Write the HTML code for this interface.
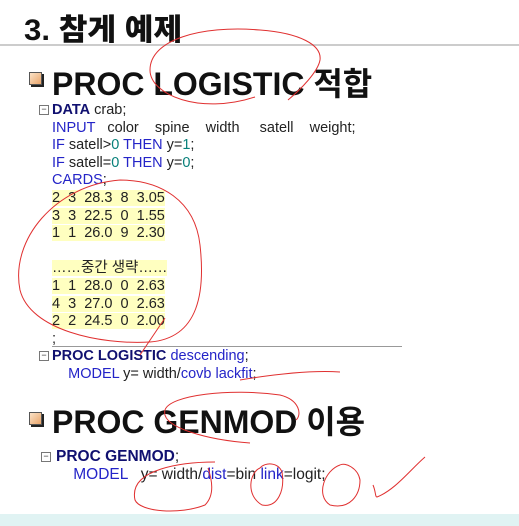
<!DOCTYPE html>
<html><head><meta charset="utf-8"><style>
body{margin:0;width:519px;height:526px;background:#fff;position:relative;overflow:hidden;font-family:"Liberation Sans","Noto Sans CJK KR",sans-serif}
.a{position:absolute;white-space:pre}
.t{font-weight:900;font-size:30px;color:#111;left:24px;top:5px;transform:scaleX(1.04);transform-origin:left}
.h{font-weight:bold;font-size:32px;color:#111;left:52px}
.bul{position:absolute;width:11px;height:11px;background:linear-gradient(135deg,#fbe3c8,#e9a46a);border:1px solid #555;box-shadow:2px 2px 0 #222}
.c{font-size:14.5px;color:#222;left:52px;line-height:17.6px}
.k{color:#2424c8}.b{color:#101070;font-weight:bold}.g{color:#08807a}
.y{background:#ffffc0}
.m{position:absolute;width:8px;height:8px;border:1px solid #777;font-size:9px;line-height:7px;text-align:center;color:#333}
</style></head><body>
<div class="a t">3. 참게 예제</div>
<div style="position:absolute;left:0;top:44px;width:519px;height:2px;background:#ccc"></div>
<div class="bul" style="left:29px;top:72px"></div>
<div class="a h" style="top:59px">PROC LOGISTIC 적합</div>
<div class="m" style="left:39px;top:105px">−</div>
<div class="a c" style="top:102px"><span class="b">DATA</span> crab;
<span class="k">INPUT</span>   color    spine    width     satell    weight;
<span class="k">IF</span> satell&gt;<span class="g">0</span> <span class="k">THEN</span> y=<span class="g">1</span>;
<span class="k">IF</span> satell=<span class="g">0</span> <span class="k">THEN</span> y=<span class="g">0</span>;
<span class="k">CARDS</span>;
<span class="y">2  3  28.3  8  3.05</span>
<span class="y">3  3  22.5  0  1.55</span>
<span class="y">1  1  26.0  9  2.30</span>

<span class="y">……중간 생략……</span>
<span class="y">1  1  28.0  0  2.63</span>
<span class="y">4  3  27.0  0  2.63</span>
<span class="y">2  2  24.5  0  2.00</span>
;</div>
<div style="position:absolute;left:52px;top:346px;width:350px;height:1px;background:#999"></div>
<div class="m" style="left:39px;top:351px">−</div>
<div class="a c" style="top:348px"><span class="b">PROC LOGISTIC</span> <span class="k">descending</span>;
    <span class="k">MODEL</span> y= width/<span class="k">covb lackfit</span>;</div>
<div class="bul" style="left:29px;top:412px"></div>
<div class="a h" style="top:397px">PROC GENMOD 이용</div>
<div class="m" style="left:41px;top:452px">−</div>
<div class="a c" style="top:448px;left:56px;font-size:15.5px"><span class="b">PROC GENMOD</span>;
    <span class="k">MODEL</span>   y= width/<span class="k">dist</span>=bin <span class="k">link</span>=logit;</div>
<div style="position:absolute;left:0;top:514px;width:519px;height:12px;background:#e0f3f3"></div>
<svg style="position:absolute;left:0;top:0" width="519" height="526" fill="none" stroke="#e03030" stroke-width="1">
<path d="M255 97 C200 115 150 95 150 70 C150 40 200 25 260 30 C300 33 322 45 320 60 C318 72 300 90 288 100"/>
<path d="M120 180 C55 185 10 240 20 290 C30 330 100 345 150 342 C200 338 205 290 200 245 C195 200 160 180 120 180"/>
<path d="M165 318 L140 355"/>
<path d="M340 372 C310 370 270 375 240 380"/>
<path d="M250 443 C210 440 160 428 165 410 C170 395 230 388 280 395 C300 400 302 415 296 420"/>
<path d="M215 462 C185 462 128 468 135 500 C140 512 180 515 205 505 C215 495 212 480 208 468"/>
<path d="M260 468 C250 472 245 495 262 505 C278 508 285 490 282 472 C278 462 265 462 260 468"/>
<path d="M340 465 C325 470 315 495 330 505 C350 510 360 495 360 480 C358 468 345 462 340 465"/>
<path d="M373 485 C376 492 375 497 377 497 C395 490 410 470 425 457"/>
</svg>
</body></html>
